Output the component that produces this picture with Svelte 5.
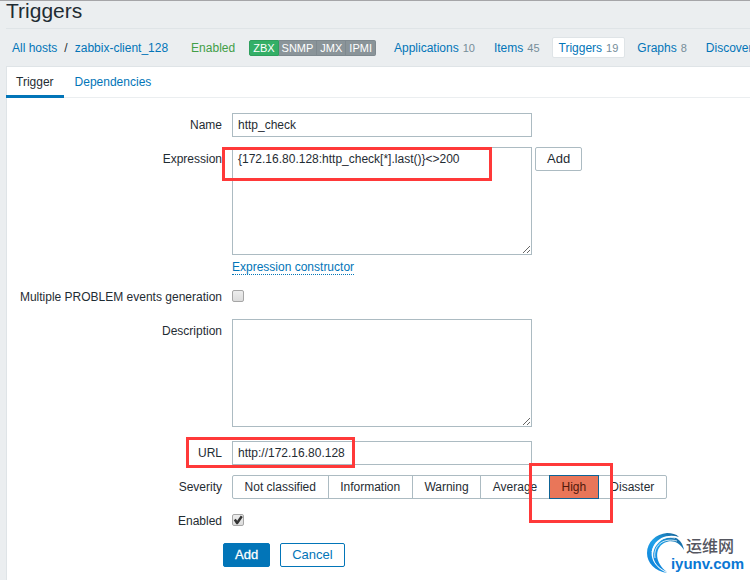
<script>
  let name = $state('http_check');
  let expression = $state('{172.16.80.128:http_check[*].last()}<>200');
  let description = $state('');
  let url = $state('http://172.16.80.128');
  let multiple = $state(false);
  let enabled = $state(true);
  let severity = $state('High');

  const interfaces = ['ZBX', 'SNMP', 'JMX', 'IPMI'];
  const sections = [
    { label: 'Applications', count: 10 },
    { label: 'Items', count: 45 },
    { label: 'Triggers', count: 19, current: true },
    { label: 'Graphs', count: 8 },
    { label: 'Discovery' }
  ];
  const severities = ['Not classified', 'Information', 'Warning', 'Average', 'High', 'Disaster'];
</script>

<div class="page">
  <header><h1>Triggers</h1></header>

  <nav class="hostbar">
    <a href="#hosts">All hosts</a>
    <span class="slash">/</span>
    <a href="#host">zabbix-client_128</a>
    <span class="status">Enabled</span>
    <span class="interfaces">
      {#each interfaces as item, i}
        <span class:on={i === 0}>{item}</span>
      {/each}
    </span>
    <span class="sections">
      {#each sections as s}
        <span class="section" class:current={s.current}><a href="#{s.label}">{s.label}</a>{#if s.count}<small>{s.count}</small>{/if}</span>
      {/each}
    </span>
  </nav>

  <main>
    <div class="tabs">
      <a class="active" href="#trigger">Trigger</a>
      <a href="#dependencies">Dependencies</a>
    </div>

    <form onsubmit={(e) => e.preventDefault()}>
      <div class="row">
        <label for="name">Name</label>
        <div class="field"><input id="name" class="text" type="text" bind:value={name} /></div>
      </div>

      <div class="row">
        <label for="expression">Expression</label>
        <div class="field">
          <div class="with-button">
            <textarea id="expression" spellcheck="false" bind:value={expression}></textarea>
            <button type="button" class="plain">Add</button>
          </div>
          <div class="below"><a href="#constructor">Expression constructor</a></div>
          <span class="mark mark-expression"></span>
        </div>
      </div>

      <div class="row">
        <label for="multiple">Multiple PROBLEM events generation</label>
        <div class="field check"><input id="multiple" type="checkbox" bind:checked={multiple} /></div>
      </div>

      <div class="row tall">
        <label for="description">Description</label>
        <div class="field"><textarea id="description" bind:value={description}></textarea></div>
      </div>

      <div class="row">
        <label for="url">URL</label>
        <div class="field">
          <input id="url" class="text" type="text" bind:value={url} />
          <span class="mark mark-url"></span>
        </div>
      </div>

      <div class="row">
        <span class="label" id="severity-label">Severity</span>
        <div class="field segments" role="radiogroup" aria-labelledby="severity-label">
          {#each severities as s}
            <label class="segment" class:selected={severity === s}>
              <input type="radio" name="severity" value={s} bind:group={severity} />{s}
              {#if s === 'High'}<span class="mark mark-severity"></span>{/if}
            </label>
          {/each}
        </div>
      </div>

      <div class="row">
        <label for="enabled">Enabled</label>
        <div class="field check"><input id="enabled" type="checkbox" bind:checked={enabled} /></div>
      </div>

      <div class="actions">
        <button type="submit" class="primary">Add</button>
        <button type="button" class="secondary">Cancel</button>
      </div>
    </form>
  </main>

  <div class="watermark">
    <svg width="40" height="42" viewBox="0 0 40 42" aria-hidden="true">
      <defs>
        <linearGradient id="swirl" x1="0" y1="1" x2="1" y2="0">
          <stop offset="0" stop-color="#0a78d4" />
          <stop offset="0.5" stop-color="#1fa3ea" />
          <stop offset="1" stop-color="#155f94" />
        </linearGradient>
      </defs>
      <path d="M20 40C8 38 0 30 0 20C0 9 9 1 20 0C25 0 29 1 32 4C22 1 12 4 7 12C1 23 7 34 20 40Z" fill="url(#swirl)" />
      <path d="M20 39C9 34 4 26 7 17C10 8 20 2 29 5C33 7 36 11 37 17C32 9 25 6 17 10C7 16 8 30 20 39Z" fill="url(#swirl)" />
      <path d="M5 19C7 9 17 2 28 5M8 25C6 14 15 4 30 8" fill="none" stroke="#fff" stroke-width="0.8" />
    </svg>
    <div class="brand"><span class="cn">运维网</span><span class="domain">iyunv.com</span></div>
  </div>
</div>

<style>
  :global(body) { margin: 0; background: #ebeef0; }
  .page {
    position: relative;
    display: flex;
    flex-direction: column;
    box-sizing: border-box;
    min-height: 100vh;
    padding-left: 6px;
    overflow: hidden;
    border-top: 1px solid #a5a5a8;
    background: #ebeef0;
    color: #1f2c33;
    font: 12px/24px "Liberation Sans", Arial, sans-serif;
  }
  a { color: #0275b8; text-decoration: none; }
  header { height: 27px; border-bottom: 1px solid #dfe4e7; }
  h1 { margin: 0; font-size: 21px; line-height: 20px; font-weight: 400; }

  .hostbar {
    display: flex;
    align-items: center;
    height: 37px;
    padding-left: 6px;
    white-space: nowrap;
  }
  .slash { margin: 0 7px; }
  .status { margin-left: 23px; color: #429e47; }
  .interfaces { display: flex; margin-left: 14px; }
  .interfaces span {
    padding: 0 3px;
    border: 1px solid #7f898f;
    border-left-width: 0;
    background: #8a9499;
    color: #fff;
    font-size: 11px;
    line-height: 14px;
  }
  .interfaces .on { border: 1px solid #2f9f5e; background: #34af67; border-radius: 2px 0 0 2px; }
  .interfaces span:last-child { border-radius: 0 2px 2px 0; }
  .sections { display: flex; gap: 5px; margin-left: 11px; }
  .section { padding: 1px 6px 0; border: 1px solid transparent; line-height: 18px; }
  .section.current { background: #fff; border-color: #dfe4e7; border-radius: 2px; }
  small { margin-left: 4px; color: #768d99; font-size: 11px; }

  main { flex: 1; background: #fff; border: 1px solid #dfe4e7; border-width: 1px 0 0 1px; }
  .tabs { display: flex; gap: 1px; margin-left: -1px; height: 30px; border-bottom: 1px solid #ebeef0; }
  .tabs a { padding: 0 10px; line-height: 30px; }
  .tabs .active { height: 28px; color: #1f2c33; border-bottom: 3px solid #0275b8; }

  form { display: flex; flex-direction: column; gap: 10px; padding: 15px 0 12px; margin-left: -1px; }
  .row { display: flex; gap: 10px; }
  .row > label, .label { width: 216px; flex: none; text-align: right; white-space: nowrap; }
  .field { position: relative; flex: 1; min-width: 0; }
  .tall { padding-bottom: 4px; }
  .text, textarea {
    display: block;
    box-sizing: border-box;
    width: 300px;
    margin: 0;
    padding: 0 5px;
    border: 1px solid #acbbc2;
    border-radius: 0;
    background: #fff;
    color: #1f2c33;
    font: 12px/24px "Liberation Sans", Arial, sans-serif;
    outline: none;
  }
  .text { height: 24px; }
  textarea { height: 108px; padding: 4px 5px; line-height: 14px; resize: vertical; }
  .with-button { display: flex; align-items: flex-start; gap: 3px; }
  .below { line-height: 14px; padding-top: 5px; height: 15px; }
  .below a { display: inline-block; border-bottom: 1px dotted #0275b8; }

  .check { display: flex; align-items: center; height: 22px; padding-bottom: 2px; }
  .check input {
    appearance: none;
    box-sizing: border-box;
    width: 12px;
    height: 12px;
    margin: 0;
    border: 1px solid #a6a6a6;
    border-radius: 2px;
    background: linear-gradient(#ededed, #dcdcdc);
  }
  .check input:checked::before {
    content: "";
    display: block;
    width: 10px;
    height: 10px;
    background: #333;
    clip-path: polygon(8% 52%, 28% 38%, 42% 58%, 78% 5%, 98% 20%, 48% 92%, 34% 92%);
  }

  button {
    box-sizing: border-box;
    height: 24px;
    margin: 0;
    padding: 0 11px;
    border: 1px solid #0275b8;
    border-radius: 2px;
    background: #fff;
    color: #0275b8;
    font: 13px/22px "Liberation Sans", Arial, sans-serif;
  }
  .plain { border-color: #acbbc2; color: #1f2c33; }
  .primary { background: #0275b8; color: #fff; -webkit-text-stroke: 0.3px #fff; }
  .actions { display: flex; gap: 10px; padding-left: 217px; }

  .segments { display: flex; max-width: 434px; }
  .segment {
    position: relative;
    flex: 1 1 auto;
    padding: 0 11px;
    border: 1px solid #acbbc2;
    margin-right: -1px;
    line-height: 22px;
    text-align: center;
    white-space: nowrap;
  }
  .segment:first-child { border-radius: 2px 0 0 2px; }
  .segment:last-child { border-radius: 0 2px 2px 0; }
  .segment input { position: absolute; opacity: 0; margin: 0; pointer-events: none; }
  .segment.selected { z-index: 1; background: #e97659; border-color: #0d6396; color: #52190b; }

  .mark { position: absolute; box-sizing: border-box; border: 3px solid #ff3939; pointer-events: none; }
  .mark-expression { left: -10px; top: 0; width: 270px; height: 34px; }
  .mark-url { left: -46px; top: -4px; width: 169px; height: 31px; }
  .mark-severity { left: -21px; top: -13px; width: 84px; height: 60px; }

  .watermark { position: absolute; right: 6px; bottom: 5px; display: flex; }
  .watermark svg { flex: none; }
  .brand { display: flex; flex-direction: column; align-items: flex-end; margin-left: -16px; padding-top: 3px; }
  .cn { margin-right: 10px; color: #55565f; font: 500 16px/18px "Noto Sans CJK SC", sans-serif; }
  .domain { color: #0a78d4; font: bold 15px/20px "Liberation Sans", Arial, sans-serif; }
</style>
